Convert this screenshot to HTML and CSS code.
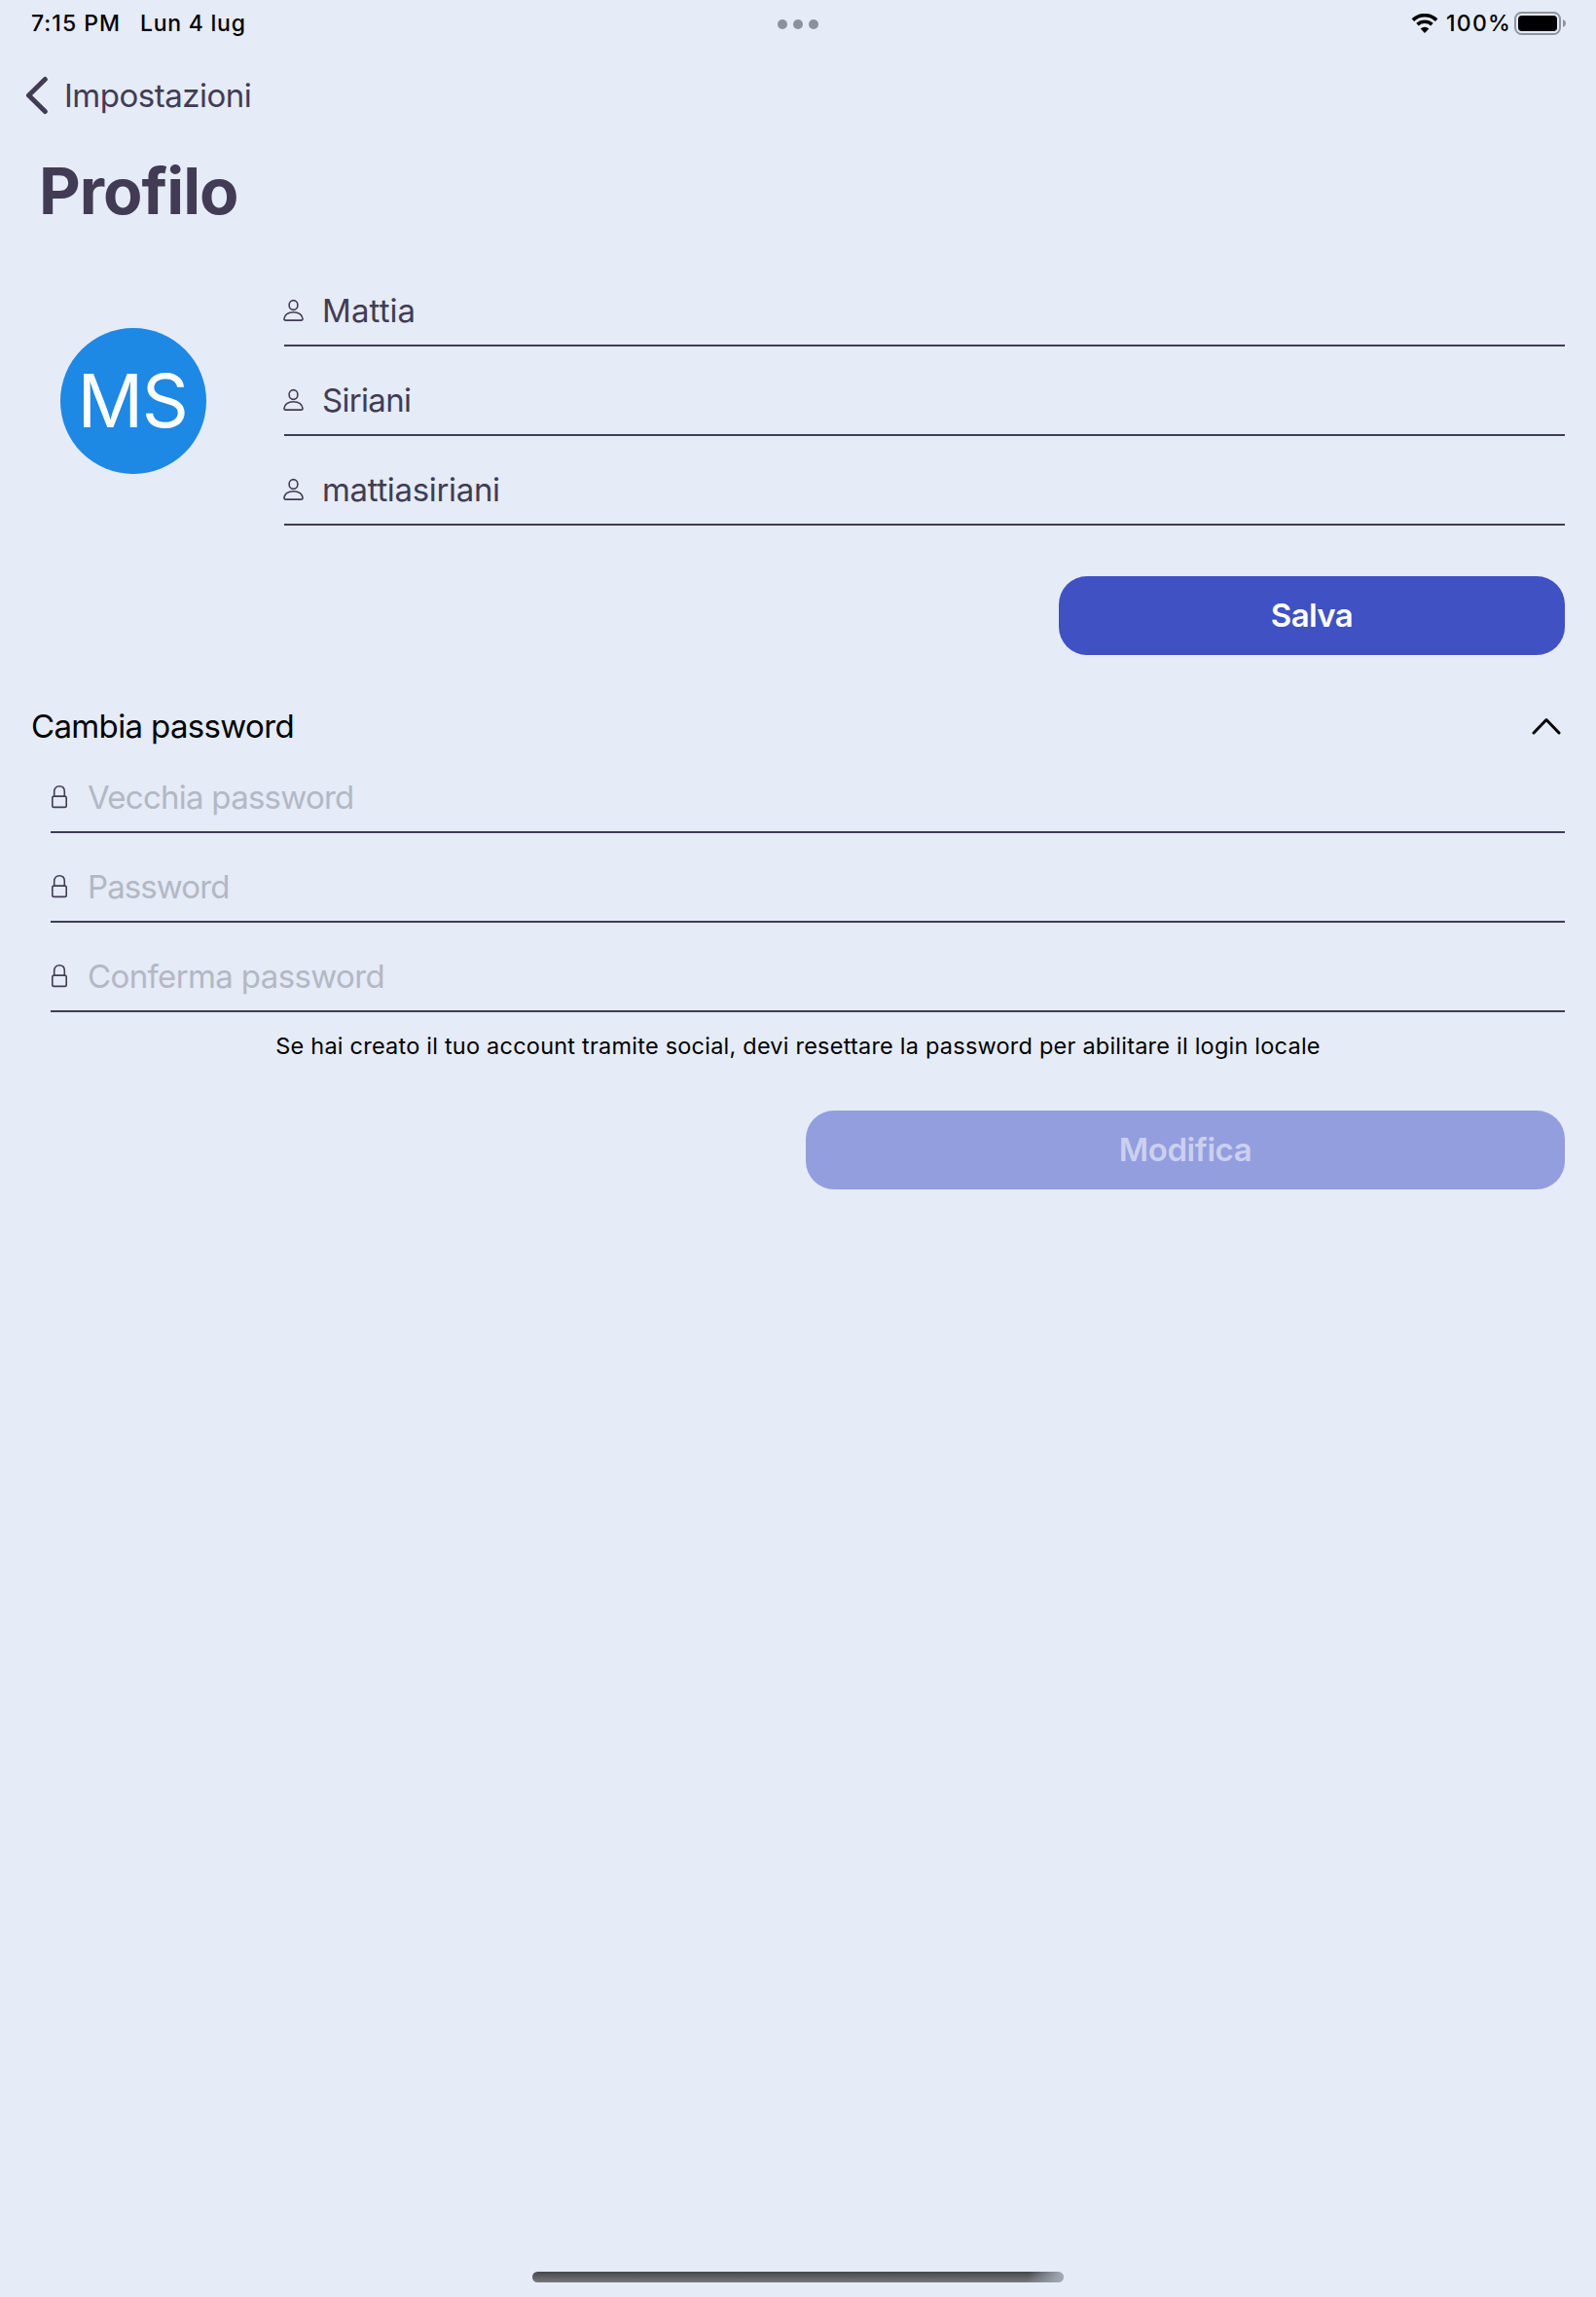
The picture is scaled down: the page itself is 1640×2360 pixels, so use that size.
FILE: index.html
```html
<!DOCTYPE html>
<html lang="it">
<head>
<meta charset="utf-8">
<title>Profilo</title>
<link rel="stylesheet" href="styles.css">
</head>
<body>
<svg class="sprite" aria-hidden="true">
  <symbol id="person" viewBox="0 0 22 24">
    <ellipse cx="10.5" cy="6.500" rx="4.400" ry="4.900"/>
    <path d="M2.500 22.100h16c1 0 1.600-.6 1.500-1.600C19.700 16.800 16.200 13.700 10.500 13.700S1.300 16.800 1 20.500c-.1 1 .5 1.600 1.500 1.600z"/>
  </symbol>
  <symbol id="lock" viewBox="0 0 18 24">
    <rect x="1.800" y="11.100" width="14.400" height="11.300" rx="1.700"/>
    <path d="M3.700 11V6.300C3.700 2.800 6 .8 9 .8s5.300 2 5.300 5.500V11"/>
  </symbol>
</svg>

<header class="status">
  <div class="status-side">
    <span class="time">7:15 PM</span>
    <span class="date">Lun 4 lug</span>
  </div>
  <div class="dots"><i></i><i></i><i></i></div>
  <div class="status-side status-right">
    <svg class="wifi" viewBox="0 0 28 20">
      <path d="M1.900 6.600A17.500 17.500 0 0 1 26.100 6.600M6.500 11.200A11 11 0 0 1 21.500 11.200" fill="none" stroke="#000" stroke-width="3.700"/>
      <path d="M14 20l-4.300-4.400a6.200 6.200 0 0 1 8.600 0z"/>
    </svg>
    <span class="percent">100%</span>
    <svg class="battery" viewBox="0 0 54 24">
      <rect x="1" y="1" width="46" height="22" rx="6.500" fill="none" stroke="#8f949e" stroke-width="2"/>
      <rect x="4" y="4" width="40" height="16" rx="3.800"/>
      <path d="M50 8.200c4 1.200 4 6.400 0 7.600z" fill="#8f949e"/>
    </svg>
  </div>
</header>

<nav class="nav">
  <svg class="back" viewBox="0 0 24 40"><path d="M21.300 3.500L4.500 20l16.800 16.500"/></svg>
  <span class="nav-label">Impostazioni</span>
</nav>

<h1 class="title">Profilo</h1>

<section class="profile">
  <div class="avatar">MS</div>
  <div class="fields">
    <div class="field"><svg class="person"><use href="#person"/></svg><span class="mattia">Mattia</span></div>
    <div class="field"><svg class="person"><use href="#person"/></svg><span class="siriani">Siriani</span></div>
    <div class="field"><svg class="person"><use href="#person"/></svg><span class="username">mattiasiriani</span></div>
  </div>
</section>
<button class="button save">Salva</button>

<section class="password">
  <div class="section-head">
    <h2 class="section-title">Cambia password</h2>
    <svg class="chevron" viewBox="0 0 30 18"><path d="M2 16L15 2.500 28 16"/></svg>
  </div>
  <div class="fields secret">
    <div class="field"><svg class="lock"><use href="#lock"/></svg><span class="old">Vecchia password</span></div>
    <div class="field"><svg class="lock"><use href="#lock"/></svg><span class="new">Password</span></div>
    <div class="field"><svg class="lock"><use href="#lock"/></svg><span class="confirm">Conferma password</span></div>
  </div>
  <p class="note">Se hai creato il tuo account tramite social, devi resettare la password per abilitare il login locale</p>
</section>
<button class="button edit" disabled>Modifica</button>

<div class="home"></div>
</body>
</html>
```
FILE: styles.css
```css
* { box-sizing: border-box; margin: 0; padding: 0; }

body {
  display: flex;
  flex-direction: column;
  height: 2360px;
  background: #e5ebf7;
  color: #413c54;
  font: 400 33px/40px Inter, "Liberation Sans", sans-serif;
  overflow: hidden;
}

.sprite { display: none; }
svg { display: block; flex: none; }

/* Status bar */
.status {
  display: flex;
  align-items: center;
  justify-content: space-between;
  height: 48px;
  padding: 0 30px 0 32px;
  color: #000;
  font-size: 23px;
  font-weight: 450;
}
.status-side { display: flex; flex: 1; align-items: center; }
.status-right { justify-content: flex-end; }
.time { width: 90px; letter-spacing: 1px; white-space: nowrap; }
.date { margin-left: 22px; letter-spacing: .75px; }
.percent { margin: 0 3px 0 8px; letter-spacing: 1.200px; }
.dots { display: flex; gap: 6px; padding-top: 2px; margin-left: -2px; }
.dots i { width: 10px; height: 10px; border-radius: 50%; background: #8b919d; }
.wifi { width: 28px; height: 20px; }
.battery { width: 54px; height: 24px; }

/* Navigation */
.nav { display: flex; align-items: center; height: 100px; padding-left: 25px; }
.back { width: 24px; height: 40px; }
.back path { fill: none; stroke: #413c54; stroke-width: 5; stroke-linecap: round; stroke-linejoin: round; }
.nav-label { margin-left: 17px; letter-spacing: -.5px; }

.title { padding-left: 40px; font-size: 66px; line-height: 96px; font-weight: 700; letter-spacing: -1px; }

/* Profile */
.profile { display: flex; align-items: center; margin-top: 20px; padding: 0 32px 0 62px; }
.avatar {
  width: 150px;
  height: 150px;
  margin-top: 20px;
  padding-right: 2px;
  border-radius: 50%;
  background: #1e88e5;
  color: #fff;
  font-size: 75px;
  line-height: 149px;
  letter-spacing: -1.400px;
  text-align: center;
}
.fields { flex: 1; margin-left: 80px; }
.field { display: flex; align-items: center; height: 92px; padding-top: 20px; border-bottom: 2px solid #413c54; }
.person, .lock { fill: none; stroke: #413c54; stroke-width: 1.600; }
.person { width: 22px; height: 24px; margin: 0 18px 0 -1px; }
.lock { width: 18px; height: 24px; }
.mattia { letter-spacing: .1px; }
.siriani { letter-spacing: -.7px; }
.username { letter-spacing: -.34px; }

.button {
  flex: none;
  align-self: flex-end;
  height: 81px;
  margin-right: 32px;
  border: 0;
  border-radius: 29px;
  background: #3f51c3;
  color: #fff;
  font: inherit;
  font-weight: 600;
}
.save { width: 520px; margin-top: 52px; padding-bottom: 2px; letter-spacing: -.57px; }
.edit { width: 780px; margin-top: 41px; padding-bottom: 2px; background: #939ede; color: #cbd0f0; letter-spacing: -.42px; }

/* Password */
.password { padding: 0 32px; }
.section-head {
  display: flex;
  align-items: center;
  justify-content: space-between;
  height: 91px;
  padding-top: 54px;
  color: #000;
}
.section-title { font-size: 33px; font-weight: 400; letter-spacing: -.65px; }
.chevron { width: 30px; height: 18px; margin-right: 4px; }
.chevron path { fill: none; stroke: #000; stroke-width: 3; stroke-linecap: round; stroke-linejoin: round; }
.secret { margin-left: 20px; color: #b3b8c4; }
.secret .lock { margin-right: 20px; }
.old { letter-spacing: -.75px; }
.new { letter-spacing: -.9px; }
.confirm { letter-spacing: -.63px; }
.note { height: 60px; color: #000; font-size: 23.500px; line-height: 70px; letter-spacing: .22px; text-align: center; }

.home {
  width: 546px;
  height: 11px;
  margin: auto auto 15px;
  border-radius: 6px;
  background:
    linear-gradient(105deg, transparent 93%, #a0a6b0 99%),
    linear-gradient(#43474c, #77787c);
}
```
